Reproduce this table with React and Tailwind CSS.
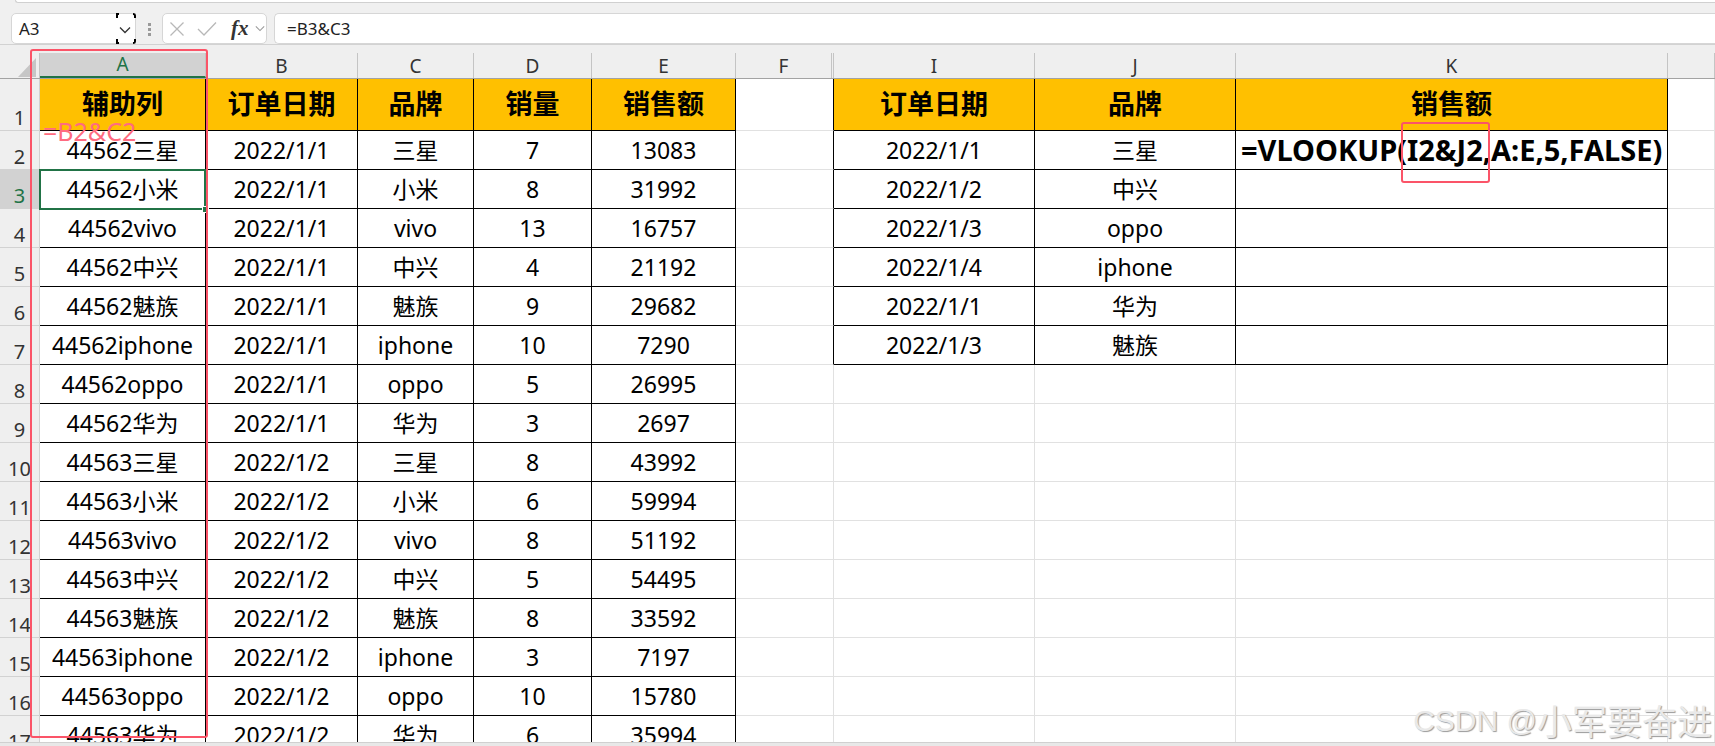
import React from 'react';

const COLS = [
  { key: 'A', cls: 'w-[166px]' },
  { key: 'B', cls: 'w-[152px]' },
  { key: 'C', cls: 'w-[116px]' },
  { key: 'D', cls: 'w-[118px]' },
  { key: 'E', cls: 'w-[144px]' },
  { key: 'F', cls: 'w-[98px]' },
  { key: 'I', cls: 'w-[201px]' },
  { key: 'J', cls: 'w-[201px]' },
  { key: 'K', cls: 'w-[432px]' },
  { key: '', cls: 'flex-1' },
];

const left = [
  ['辅助列', '订单日期', '品牌', '销量', '销售额'],
  ['44562三星', '2022/1/1', '三星', '7', '13083'],
  ['44562小米', '2022/1/1', '小米', '8', '31992'],
  ['44562vivo', '2022/1/1', 'vivo', '13', '16757'],
  ['44562中兴', '2022/1/1', '中兴', '4', '21192'],
  ['44562魅族', '2022/1/1', '魅族', '9', '29682'],
  ['44562iphone', '2022/1/1', 'iphone', '10', '7290'],
  ['44562oppo', '2022/1/1', 'oppo', '5', '26995'],
  ['44562华为', '2022/1/1', '华为', '3', '2697'],
  ['44563三星', '2022/1/2', '三星', '8', '43992'],
  ['44563小米', '2022/1/2', '小米', '6', '59994'],
  ['44563vivo', '2022/1/2', 'vivo', '8', '51192'],
  ['44563中兴', '2022/1/2', '中兴', '5', '54495'],
  ['44563魅族', '2022/1/2', '魅族', '8', '33592'],
  ['44563iphone', '2022/1/2', 'iphone', '3', '7197'],
  ['44563oppo', '2022/1/2', 'oppo', '10', '15780'],
  ['44563华为', '2022/1/2', '华为', '6', '35994'],
];

const right = [
  ['订单日期', '品牌', '销售额'],
  ['2022/1/1', '三星', '=VLOOKUP(I2&J2,A:E,5,FALSE)'],
  ['2022/1/2', '中兴', ''],
  ['2022/1/3', 'oppo', ''],
  ['2022/1/4', 'iphone', ''],
  ['2022/1/1', '华为', ''],
  ['2022/1/3', '魅族', ''],
];

const Chevron = ({ className }) => (
  <svg className={className} viewBox="0 0 12 8" fill="none">
    <polyline points="1,1.5 6,6.5 11,1.5" stroke="currentColor" strokeWidth="1.3" />
  </svg>
);

const Toolbar = () => (
  <div className="h-[44px] bg-[#f0f0f0] flex flex-col">
    <div className="h-[3px] pl-[15px]">
      <div className="h-full bg-white border-b border-l border-[#d0d0d0] rounded-bl-[4px]" />
    </div>
    <div className="flex items-start mt-[10px] h-[31px]">
      <div className="relative ml-[11px] w-[125px] h-[31px] bg-white border border-[#d6d6d6] rounded-[5px] flex items-center">
        <span className="pl-[7px] text-[17px] text-[#222] font-['Noto_Sans',sans-serif]">A3</span>
        <Chevron className="absolute left-[107px] top-[12px] w-[12px] h-[8px] text-[#333]" />
        <div className="absolute left-[104px] -top-px w-[3px] h-[5px] border-l-2 border-t-2 border-black" />
        <div className="absolute left-[104px] -bottom-px w-[3px] h-[5px] border-l-2 border-b-2 border-black" />
        <div className="absolute -right-px -top-px w-[3px] h-[5px] border-r-2 border-t-2 border-black rounded-tr-[3px]" />
        <div className="absolute -right-px -bottom-px w-[3px] h-[5px] border-r-2 border-b-2 border-black rounded-br-[3px]" />
      </div>
      <div className="ml-[12px] mt-[10px] flex flex-col gap-[2px]">
        <div className="w-[3px] h-[3px] bg-[#9a9a9a]" />
        <div className="w-[3px] h-[3px] bg-[#9a9a9a]" />
        <div className="w-[3px] h-[3px] bg-[#9a9a9a]" />
      </div>
      <div className="ml-[11px] w-[105px] h-[31px] bg-white border border-[#d6d6d6] rounded-[5px] flex items-center">
        <svg className="ml-[6px] w-[16px] h-[16px]" viewBox="0 0 16 16" fill="none">
          <path d="M1.5 1.5 L14.5 14.5 M14.5 1.5 L1.5 14.5" stroke="#b8b8b8" strokeWidth="1.3" />
        </svg>
        <svg className="ml-[12px] w-[20px] h-[16px]" viewBox="0 0 20 16" fill="none">
          <polyline points="1,8 7,14 19,1.5" stroke="#b8b8b8" strokeWidth="1.3" />
        </svg>
        <span className="ml-[14px] text-[21px] italic font-bold leading-none text-[#333] font-['Liberation_Serif',serif]">fx</span>
        <Chevron className="ml-[6px] w-[10px] h-[7px] text-[#9a9a9a]" />
      </div>
      <div className="ml-[7px] flex-1 h-[31px] bg-white border border-r-0 border-[#d6d6d6] rounded-l-[5px] flex items-center">
        <span className="pl-[12px] text-[17px] text-[#222] font-['Noto_Sans',sans-serif]">=B3&amp;C3</span>
      </div>
    </div>
  </div>
);

const ColumnHeader = () => (
  <div className="h-[35px] flex bg-[#efefef] border-t border-b border-t-[#d2d2d2] border-b-[#a3a3a3] font-['Noto_Sans',sans-serif]">
    <div className="w-[40px] h-full pt-[8px]">
      <div className="h-full border-r border-[#c4c4c4]">
        <svg className="w-[39px] h-[26px]" viewBox="0 0 39 26">
          <polygon points="36,5 36,24 18,24" fill="#c6c6c6" />
        </svg>
      </div>
    </div>
    {COLS.map((c) => {
      const sel = c.key === 'A';
      const inner = sel
        ? 'bg-[#d2d2d2] border-b-2 border-b-[#217346] text-[#217346]'
        : c.key === 'F'
          ? 'border-r-[3px] border-double text-[#333]'
          : 'text-[#333]';
      return (
        <div key={c.key || 'L'} className={`${c.cls} h-full pt-[8px] shrink-0`}>
          <div className={`h-full border-r border-[#c4c4c4] flex items-end justify-center text-[19px] leading-none pb-[2px] ${inner}`}>
            {c.key}
          </div>
        </div>
      );
    })}
  </div>
);

const cellBorder = (ci, n) => {
  if (ci <= 4) return 'border-r-black border-b-black';
  if (ci === 5) return n <= 7 ? 'border-r-black border-b-[#e1e1e1]' : 'border-r-[#e1e1e1] border-b-[#e1e1e1]';
  if (ci <= 8) return n <= 7 ? 'border-r-black border-b-black' : 'border-r-[#e1e1e1] border-b-[#e1e1e1]';
  return 'border-r-[#e1e1e1] border-b-[#e1e1e1]';
};

const Row = ({ n }) => {
  const head = n === 1;
  const vals = [
    ...(left[n - 1] || ['', '', '', '', '']),
    '',
    ...(right[n - 1] || ['', '', '']),
    '',
  ];
  return (
    <div className={`flex shrink-0 ${head ? 'h-[52px]' : 'h-[39px]'}`}>
      <div
        className={`w-[40px] shrink-0 border-r border-b border-[#d2d2d2] flex items-end justify-center pb-[2px] text-[20px] leading-none font-['Noto_Sans',sans-serif] ${
          n === 3 ? 'bg-[#d2d2d2] text-[#217346]' : 'bg-[#efefef] text-[#333]'
        }`}
      >
        {n}
      </div>
      {COLS.map((c, ci) => {
        const yellow = head && ci !== 5 && ci !== 9;
        const formula = n === 2 && ci === 8;
        return (
          <div
            key={ci}
            className={`${c.cls} shrink-0 border-r border-b ${cellBorder(ci, n)} flex items-center ${
              formula ? 'justify-start pl-[5px]' : 'justify-center'
            } whitespace-nowrap overflow-visible ${yellow ? 'bg-[#ffc000]' : 'bg-white'} ${
              head ? 'text-[27px] font-bold' : formula ? 'text-[29px] font-bold' : 'text-[23px]'
            } text-black`}
          >
            {vals[ci]}
          </div>
        );
      })}
    </div>
  );
};

export default function App() {
  const rows = Array.from({ length: 17 }, (_, i) => i + 1);
  return (
    <div className="relative w-[1715px] h-[746px] overflow-hidden bg-white flex flex-col font-['Noto_Sans','Noto_Sans_CJK_SC',sans-serif]">
      <Toolbar />
      <ColumnHeader />
      <div className="flex-1 flex flex-col overflow-hidden">
        {rows.map((n) => (
          <Row key={n} n={n} />
        ))}
      </div>
      <div className="h-[4px] bg-[#e8e8e8] border-t border-[#d0d0d0]" />

      {/* selected cell A3 */}
      <div className="absolute left-[39px] top-[169px] w-[167px] h-[41px] border-2 border-[#217346]" />
      <div className="absolute left-[202px] top-[206px] w-[7px] h-[7px] bg-[#217346] border border-white" />

      {/* annotations */}
      <div className="absolute left-[43px] top-[119px] text-[25px] leading-none text-[#ff6b80] font-['Noto_Sans',sans-serif]">
        =B2&amp;C2
      </div>
      <div className="absolute left-[30px] top-[49px] w-[178px] h-[689px] border-2 border-[#fb5468] rounded-[3px]" />
      <div className="absolute left-[1401px] top-[122px] w-[89px] h-[61px] border-2 border-[#fb5468] rounded-[3px]" />

      <div className="absolute right-[3px] top-[694px] flex items-center text-[#e9e9e9] [text-shadow:1px_1px_1px_#9a9a9a] whitespace-nowrap">
        <span className="text-[30px] font-['Liberation_Sans',sans-serif]">CSDN @</span>
        <span className="text-[35px] font-['Noto_Sans_CJK_SC',sans-serif]">小军要奋进</span>
      </div>
    </div>
  );
}
